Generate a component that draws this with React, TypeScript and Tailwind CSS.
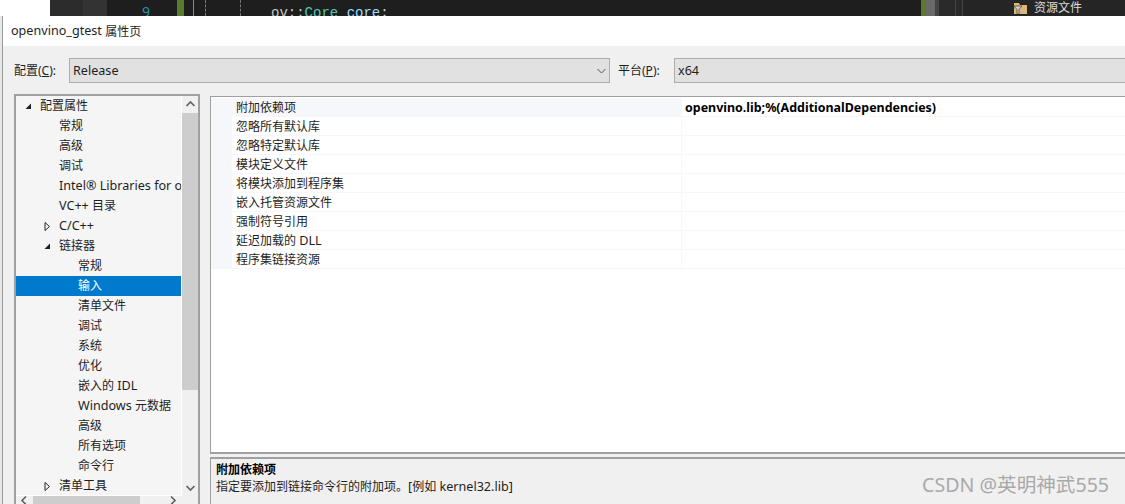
const font = '[font-family:"Noto_Sans","Noto_Sans_CJK_SC",sans-serif]'

const treeRows = [
  { label: "配置属性", indent: 0, arrow: "open" },
  { label: "常规", indent: 1 },
  { label: "高级", indent: 1 },
  { label: "调试", indent: 1 },
  { label: "Intel® Libraries for oneAPI", indent: 1 },
  { label: "VC++ 目录", indent: 1 },
  { label: "C/C++", indent: 1, arrow: "closed" },
  { label: "链接器", indent: 1, arrow: "open" },
  { label: "常规", indent: 2 },
  { label: "输入", indent: 2, selected: true },
  { label: "清单文件", indent: 2 },
  { label: "调试", indent: 2 },
  { label: "系统", indent: 2 },
  { label: "优化", indent: 2 },
  { label: "嵌入的 IDL", indent: 2 },
  { label: "Windows 元数据", indent: 2 },
  { label: "高级", indent: 2 },
  { label: "所有选项", indent: 2 },
  { label: "命令行", indent: 2 },
  { label: "清单工具", indent: 1, arrow: "closed" },
]

const props = [
  "附加依赖项",
  "忽略所有默认库",
  "忽略特定默认库",
  "模块定义文件",
  "将模块添加到程序集",
  "嵌入托管资源文件",
  "强制符号引用",
  "延迟加载的 DLL",
  "程序集链接资源",
]

// latin runs render a bit wider than the cjk ones in the dialog
function Mixed({ text }: { text: string }) {
  const parts = text.split(/([\x00-\x7f®]+)/).filter(Boolean)
  return (
    <>
      {parts.map((part, i) =>
        /^[\x00-\x7f®]/.test(part) ? (
          <span key={i} className="text-[12.6px] whitespace-pre">
            {part}
          </span>
        ) : (
          <span key={i}>{part}</span>
        ),
      )}
    </>
  )
}

function Arrow({ open }: { open?: boolean }) {
  return (
    <svg width="10" height="10" viewBox="0 0 10 10" className="shrink-0">
      {open ? (
        <path d="M8 2.5V8H2.5Z" fill="#1e1e1e" />
      ) : (
        <path d="M3 1.5L7.5 5.5L3 9.5Z" fill="#fff" stroke="#1e1e1e" />
      )}
    </svg>
  )
}

function Chevron({ dir, color = "#606060" }: { dir: "up" | "down" | "left" | "right"; color?: string }) {
  const d = {
    up: "M1.5 7L5.5 3L9.5 7",
    down: "M1.5 4L5.5 8L9.5 4",
    left: "M7 1.5L3 5.5L7 9.5",
    right: "M4 1.5L8 5.5L4 9.5",
  }[dir]
  return (
    <svg width="11" height="11" viewBox="0 0 11 11">
      <path d={d} fill="none" stroke={color} strokeWidth={color === "#606060" ? 1.6 : 1} />
    </svg>
  )
}

function Tree() {
  return (
    <div className="flex w-[186px] h-[420px] border-t-2 border-l-2 border-r-2 border-[#a0a0a0]">
      <div className="w-[166px] shrink-0 h-[400px] bg-[#f5f5f5] overflow-hidden border-r border-b border-white">
        {treeRows.map((row, i) => (
          <div
            key={i}
            className={`flex items-center h-5 whitespace-nowrap text-xs ${
              row.selected ? "bg-[#007acc] text-white" : "text-[#1e1e1e]"
            }`}
          >
            <div className={`flex justify-end shrink-0 ${row.indent === 0 ? "w-[17px]" : "w-[36px]"}`}>
              {row.arrow && <Arrow open={row.arrow === "open"} />}
            </div>
            <span className={row.indent === 2 ? "ml-[26px]" : "ml-[7px]"}>
              <Mixed text={row.label} />
            </span>
          </div>
        ))}
      </div>
      <div className="w-[16px] shrink-0 flex flex-col bg-[#f0f0f0] h-[400px]">
        <div className="h-[17px] flex items-center justify-center">
          <Chevron dir="up" />
        </div>
        <div className="h-[277px] bg-[#cdcdcd]" />
        <div className="flex-1 flex items-end justify-center pb-[3px]">
          <Chevron dir="down" />
        </div>
      </div>
    </div>
  )
}

function Select({ value, className, arrow }: { value: string; className: string; arrow?: boolean }) {
  return (
    <div
      className={`h-[25px] flex items-center justify-between bg-[#e1e1e1] border border-[#adadad] pl-[3px] pr-[2px] text-xs text-[#1e1e1e] ${className}`}
    >
      <span className="pt-px">
        <Mixed text={value} />
      </span>
      {arrow && <Chevron dir="down" color="#555555" />}
    </div>
  )
}

export default function App() {
  return (
    <div className={`relative w-[1125px] h-[504px] overflow-hidden bg-[#e8e8e8] ${font}`}>
      {/* editor behind the dialog */}
      <div className="flex h-4 bg-[#1e1e1e] text-xs overflow-hidden">
        <div className="w-[50px] bg-white" />
        <div className="w-[33px] bg-[#2c2c2c]" />
        <div className="w-[24px] bg-[#333333]" />
        <div className="w-[35px] shrink-0" />
        <div className="w-[35px] shrink-0 text-[#2b91af] text-[14px] leading-[20px] pt-[2px]">9</div>
        <div className="w-[7px] shrink-0 bg-[#587c2c]" />
        <div className="w-[9px] shrink-0" />
        <div className="w-px shrink-0 bg-[#8a8a8a]" />
        <div className="w-[11px] shrink-0" />
        <div className="w-px h-full shrink-0 border-l border-dashed border-[#777777]" />
        <div className="w-[34px] shrink-0" />
        <div className="w-px h-full shrink-0 border-l border-dashed border-[#777777]" />
        <div className="w-[30px] shrink-0" />
        <div className="w-[650px] shrink-0 text-[#c8c8c8] text-[14px] leading-[20px] pt-[3px] [font-family:'Liberation_Mono',monospace] whitespace-nowrap">
          ov::<span className="text-[#4ec9b0]">Core</span> <span className="text-[#9cdcfe]">core</span>;
        </div>
        <div className="w-[5px] shrink-0 bg-[#587c2c]" />
        <div className="w-[9px] shrink-0 bg-[#6a6a6a]" />
        <div className="w-[4px] shrink-0 bg-[#444444]" />
        <div className="w-[16px] shrink-0 bg-[#2a2a2a]" />
        <div className="w-px shrink-0 bg-[#444444]" />
        <div className="w-[6px] shrink-0 bg-[#2a2a2a]" />
        <div className="w-px shrink-0 bg-[#444444]" />
        <div className="flex-1 bg-[#252526] flex items-center text-[#dcdcdc] pl-[51px] gap-[7px]">
          <svg width="13" height="13" viewBox="0 0 13 13" className="shrink-0">
            <path d="M0 1H5L6 3H13V12H0Z" fill="#dcb67a" />
            <path d="M0 4H8L5 7.5V12H3V7.5Z" fill="#d0d0d0" stroke="#252526" strokeWidth="0.6" />
          </svg>
          <span>资源文件</span>
        </div>
      </div>

      {/* dialog */}
      <div className="ml-[2px] h-[488px] bg-[#f0f0f0] border-l border-[#9a9a9a]">
        <div className="h-[30px] bg-white flex items-center pl-2 pt-[1px] text-xs text-[#1e1e1e] whitespace-nowrap">
          <Mixed text="openvino_gtest 属性页" />
        </div>

        <div className="flex items-center h-[25px] mt-3 pl-[11px] text-xs text-[#1e1e1e]">
          <span className="w-[55px] shrink-0">
            配置(<span className="underline">C</span>):
          </span>
          <Select value="Release" arrow className="w-[541px] shrink-0" />
          <span className="w-[56px] shrink-0 ml-[8px]">
            平台(<span className="underline">P</span>):
          </span>
          <Select value="x64" className="w-[470px] shrink-0" />
        </div>

        <div className="flex mt-[11px] pl-[11px]">
          <div className="relative">
            <Tree />
            <div className="absolute left-[2px] top-[402px] flex items-center w-[181px] h-2 bg-[#f0f0f0] overflow-hidden">
              <div className="w-[17px] flex justify-center">
                <Chevron dir="left" />
              </div>
              <div className="w-[107px] h-2 bg-[#cdcdcd]" />
              <div className="ml-[27px]">
                <Chevron dir="right" />
              </div>
            </div>
          </div>

          <div className="ml-[10px] flex-1 flex flex-col mt-[2px]">
            <div className="h-[358px] bg-white border-t border-l border-b-2 border-[#a0a0a0] pt-px">
              {props.map((p, i) => (
                <div key={p} className="flex h-[19px] text-xs text-[#1e1e1e]">
                  <div className="w-[21px] shrink-0 bg-[#f5f7fb]" />
                  <div
                    className={`w-[449px] shrink-0 flex items-center pl-[4px] pt-[2px] border-b border-[#f5f7fb] ${
                      i === 0 ? "bg-[#f5f7fb]" : ""
                    }`}
                  >
                    <Mixed text={p} />
                  </div>
                  <div className="flex-1 flex items-center pl-[3px] pt-[2px] border-b border-l border-[#f5f7fb] font-bold text-black">
                    {i === 0 && <span className="text-[12.45px]">openvino.lib;%(AdditionalDependencies)</span>}
                  </div>
                </div>
              ))}
            </div>
            <div className="mt-[3px] h-[47px] border-t-2 border-l border-[#a0a0a0] pl-[5px] pt-[2px] text-xs leading-[17px] text-[#1e1e1e]">
              <div className="font-bold text-black">附加依赖项</div>
              <div>
                <Mixed text="指定要添加到链接命令行的附加项。[例如 kernel32.lib]" />
              </div>
            </div>
          </div>
        </div>
      </div>

      <div className="absolute left-[922px] top-[473px] text-[19.6px] leading-6 text-[#a9a9a9] whitespace-nowrap">
        CSDN @英明神武555
      </div>
    </div>
  )
}
